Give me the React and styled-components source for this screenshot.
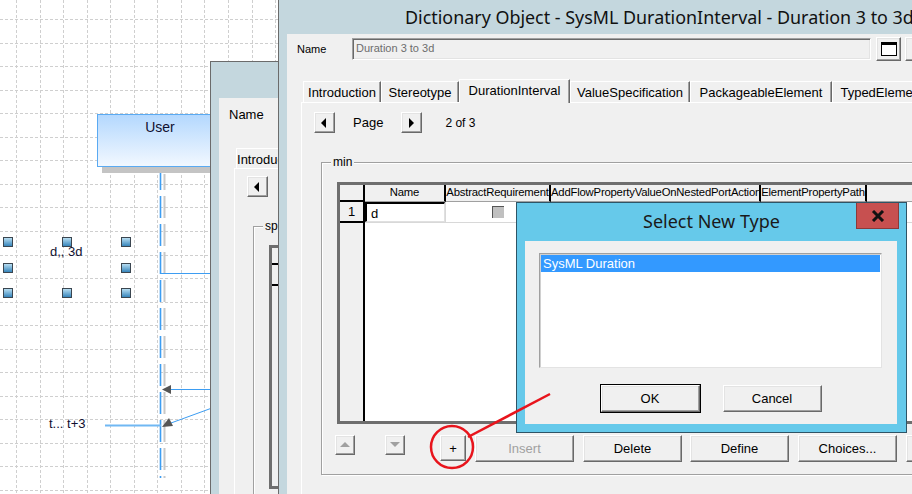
import React from 'react';
import styled, { createGlobalStyle } from 'styled-components';

const FRAME = '#c4d7de';
const EDGE = '#6b6b6b';
const FACE = '#f0f0f0';
const UI_FONT = '"Liberation Sans", Arial, sans-serif';
const TITLE_FONT = '"Noto Sans", "Open Sans", sans-serif';

const GlobalStyle = createGlobalStyle`
  html, body { margin: 0; padding: 0; }
  body { font-family: ${UI_FONT}; background: #fff; }
`;

const Screen = styled.div`
  position: relative;
  width: 912px;
  height: 494px;
  overflow: hidden;
  background: #fff;
`;

/* ---------- diagram canvas ---------- */

const Canvas = styled.div`
  position: absolute;
  inset: 0;
`;

const CanvasSvg = styled.svg`
  position: absolute;
  left: 0;
  top: 0;
`;

const UserBox = styled.div`
  position: absolute;
  left: 97px;
  top: 114px;
  width: 126px;
  height: 53px;
  box-sizing: border-box;
  border: 1px solid #5aaaf2;
  background: linear-gradient(#b4d8fe, #f2f8ff);
  box-shadow: 5px 6px 0 #c4c4c4;
  font: 14px ${UI_FONT};
  color: #101030;
  text-align: center;
  padding-top: 4px;
`;

const DiagramLabel = styled.div`
  position: absolute;
  left: ${p => p.$x}px;
  top: ${p => p.$y}px;
  font: 13px ${UI_FONT};
  color: #101030;
  white-space: nowrap;
`;

/* ---------- windows ---------- */

const Window = styled.div`
  position: absolute;
  left: ${p => p.$x}px;
  top: ${p => p.$y}px;
  width: ${p => p.$w}px;
  height: ${p => p.$h}px;
  box-sizing: border-box;
  background: ${p => p.$frame || FRAME};
  border: 1px solid ${p => p.$edge || EDGE};
  display: flex;
  flex-direction: column;
`;

const TitleBar = styled.div`
  height: ${p => p.$h}px;
  flex: none;
  display: flex;
  align-items: center;
  padding-left: ${p => p.$pad || 0}px;
  font: 17.9px ${TITLE_FONT};
  color: #111;
  white-space: nowrap;
  overflow: hidden;
`;

const Client = styled.div`
  flex: 1;
  margin-left: 8px;
  background: ${FACE};
  display: flex;
  flex-direction: column;
  padding: ${p => p.$pad};
  font: 12px ${UI_FONT};
  color: #000;
`;

const Label = styled.div`
  font-size: ${p => p.$size || 12}px;
  width: ${p => p.$w || 'auto'}px;
  flex: none;
  margin-left: ${p => p.$ml || 0}px;
  white-space: nowrap;
`;

const Row = styled.div`
  display: flex;
  align-items: ${p => p.$align || 'center'};
  margin-top: ${p => p.$mt || 0}px;
  margin-left: ${p => p.$ml || 0}px;
  height: ${p => p.$h}px;
  flex: none;
`;

const TextBox = styled.div`
  width: ${p => p.$w}px;
  height: 22px;
  box-sizing: border-box;
  border: 1px solid;
  border-color: #a0a0a0 #fff #fff #a0a0a0;
  box-shadow: inset 1px 1px 0 #696969, inset -1px -1px 0 #e3e3e3;
  padding: 3px 3px;
  font-size: 11px;
  color: #6d6d6d;
  flex: none;
`;

const Raised = styled.div`
  width: ${p => p.$w}px;
  height: ${p => p.$h}px;
  margin-left: ${p => p.$ml || 0}px;
  flex: none;
  box-sizing: border-box;
  background: ${FACE};
  border: 1px solid;
  border-color: #fff #696969 #696969 #fff;
  box-shadow: inset -1px -1px 0 #a0a0a0, inset 1px 1px 0 #e3e3e3;
  display: flex;
  align-items: center;
  justify-content: center;
  font-size: 13px;
  color: ${p => (p.$disabled ? '#a0a0a0' : '#000')};
  outline: ${p => (p.$default ? '1px solid #000' : 'none')};
`;

const TabStrip = styled.div`
  display: flex;
  align-items: flex-end;
  height: ${p => p.$h}px;
  margin-top: ${p => p.$mt}px;
  margin-left: ${p => p.$ml}px;
  padding-left: 2px;
  flex: none;
`;

const Tab = styled.div`
  width: ${p => p.$w}px;
  height: ${p => p.$h || (p.$active ? 24 : 21)}px;
  box-sizing: border-box;
  flex: none;
  border-top: 1px solid #fff;
  border-left: 1px solid #fff;
  border-right: 1px solid #696969;
  box-shadow: inset -1px 0 0 #a0a0a0;
  background: ${FACE};
  font-size: 13px;
  text-align: center;
  padding-top: 3px;
  margin-bottom: ${p => (p.$active ? -1 : 0)}px;
  position: relative;
  z-index: ${p => (p.$active ? 1 : 0)};
  white-space: nowrap;
  overflow: hidden;
`;

const TabPanel = styled.div`
  flex: 1;
  margin-left: ${p => p.$ml}px;
  border-top: 1px solid #fff;
  border-left: 1px solid #fff;
  display: flex;
  flex-direction: column;
  padding: ${p => p.$pad};
`;

const Group = styled.div`
  margin-top: ${p => p.$mt}px;
  margin-left: ${p => p.$ml}px;
  width: ${p => p.$w}px;
  height: ${p => p.$h}px;
  box-sizing: border-box;
  flex: none;
  border: 1px solid #a0a0a0;
  box-shadow: inset 1px 1px 0 #fff, 1px 1px 0 #fff;
  display: flex;
  flex-direction: column;
`;

const Legend = styled.div`
  align-self: flex-start;
  margin: -8px 0 0 9px;
  padding: 0 2px;
  height: 14px;
  line-height: 14px;
  background: ${FACE};
  font-size: 12px;
  white-space: nowrap;
`;

/* ---------- data grid ---------- */

const Grid = styled.div`
  margin-top: ${p => p.$mt}px;
  margin-left: ${p => p.$ml}px;
  height: ${p => p.$h}px;
  width: ${p => p.$w}px;
  box-sizing: border-box;
  flex: none;
  border: 3px solid #6e6e6e;
  border-right: none;
  background: #fff;
  display: flex;
  flex-direction: column;
`;

const GridRow = styled.div`
  display: flex;
  height: ${p => p.$h}px;
  flex: none;
`;

const HeadCell = styled.div`
  width: ${p => p.$w}px;
  flex: ${p => (p.$w ? 'none' : 1)};
  box-sizing: border-box;
  background: ${FACE};
  border-right: ${p => (p.$last ? 'none' : '2px solid #000')};
  border-bottom: ${p => (p.$corner ? '2px solid #000' : '1px solid #a0a0a0')};
  font-size: 11.3px;
  letter-spacing: -0.2px;
  text-align: center;
  line-height: 15px;
  white-space: nowrap;
  overflow: hidden;
`;

const RowHead = styled(HeadCell)`
  border-bottom: 2px solid #000;
  font-size: 13px;
  letter-spacing: 0;
  line-height: 19px;
`;

const Cell = styled.div`
  width: ${p => p.$w}px;
  flex: ${p => (p.$w ? 'none' : 1)};
  box-sizing: border-box;
  border-right: ${p => (p.$last ? 'none' : '1px solid #d8d8d8')};
  border-bottom: 1px solid #d8d8d8;
  display: flex;
  align-items: center;
  justify-content: center;
`;

const EditCell = styled.div`
  width: 100%;
  height: 100%;
  box-sizing: border-box;
  border-top: 2px solid #000;
  border-left: 2px solid #000;
  border-bottom: 1px solid #e0e0e0;
  border-right: 1px solid #e0e0e0;
  padding: 2px 4px;
  font-size: 13px;
`;

const Check = styled.div`
  width: 12px;
  height: 12px;
  box-sizing: border-box;
  background: #c0c0c0;
  border-top: 1px solid #555;
  border-left: 1px solid #555;
`;

const GridBody = styled.div`
  flex: 1;
  display: flex;
`;

const RowHeadFill = styled.div`
  width: 25px;
  flex: none;
  box-sizing: border-box;
  background: ${FACE};
  border-right: 2px solid #000;
`;

/* ---------- select dialog ---------- */

const DialogTitle = styled.div`
  height: 38px;
  flex: none;
  display: grid;
  grid-template-columns: 1fr auto 1fr;
  align-items: start;
`;

const DialogCaption = styled.div`
  grid-column: 2;
  font: 18px ${TITLE_FONT};
  color: #1a1a1a;
  padding-top: 6px;
`;

const CloseBtn = styled.div`
  grid-column: 3;
  justify-self: end;
  margin-right: 7px;
  width: 43px;
  height: 26px;
  box-sizing: border-box;
  background: #c75050;
  border: 1px solid #8a3a3a;
  border-top: none;
  display: flex;
  align-items: center;
  justify-content: center;
`;

const DialogBody = styled.div`
  flex: 1;
  margin: 0 9px 8px 8px;
  background: ${FACE};
  display: flex;
  flex-direction: column;
  padding: 12px 0 0 14px;
  font: 13px ${UI_FONT};
`;

const ListBox = styled.div`
  width: 343px;
  height: 115px;
  box-sizing: border-box;
  background: #fff;
  border: 1px solid;
  border-color: #a0a0a0 #e3e3e3 #e3e3e3 #a0a0a0;
  box-shadow: inset 1px 1px 0 #d0d0d0;
  padding: 1px;
`;

const ListItem = styled.div`
  height: 17px;
  background: ${p => (p.$selected ? '#3399ff' : 'transparent')};
  color: ${p => (p.$selected ? '#fff' : '#000')};
  padding-left: 2px;
  line-height: 17px;
  font-size: 13px;
`;

const DialogButtons = styled.div`
  display: flex;
  justify-content: center;
  gap: 23px;
  margin-top: 17px;
  padding-right: 14px;
`;

const Overlay = styled.svg`
  position: absolute;
  left: 0;
  top: 0;
  pointer-events: none;
`;

/* ---------- small drawings ---------- */

const Arrow = ({ dir, color = '#000' }) => {
  const pts = {
    left: '7,1 7,11 2,6',
    right: '3,1 3,11 8,6',
    up: '1,8 11,8 6,3',
    down: '1,3 11,3 6,8',
  }[dir];
  return (
    <svg width="12" height="12" viewBox="0 0 12 12">
      <polygon points={pts} fill={color} />
    </svg>
  );
};

const WindowIcon = () => (
  <svg width="16" height="14" viewBox="0 0 16 14">
    <rect x="0.5" y="0.5" width="15" height="13" fill="#fff" stroke="#000" />
    <rect x="0" y="0" width="16" height="3" fill="#000" />
  </svg>
);

const CloseX = () => (
  <svg width="14" height="12" viewBox="0 0 14 12">
    <path d="M2 1 L12 11 M12 1 L2 11" stroke="#111" strokeWidth="3" />
  </svg>
);

const gridX = Array.from({ length: 12 }, (_, i) => Math.round(16 + i * 23.55) + 0.5);
const gridY = Array.from({ length: 21 }, (_, i) => Math.round(19 + i * 23.55) + 0.5);
const handles = [
  [8, 242], [67, 242], [126, 242],
  [8, 268], [126, 268],
  [8, 293], [67, 293], [126, 293],
];

const Diagram = () => (
  <Canvas>
    <CanvasSvg width="290" height="494">
      <defs>
        <linearGradient id="hnd" x1="0" y1="0" x2="0" y2="1">
          <stop offset="0" stopColor="#bfe3f5" />
          <stop offset="1" stopColor="#2f80b8" />
        </linearGradient>
      </defs>
      {gridX.map(x => (
        <line key={'v' + x} x1={x} y1="0" x2={x} y2="494" stroke="#cfcfcf" strokeDasharray="3 2" />
      ))}
      {gridY.map(y => (
        <line key={'h' + y} x1="0" y1={y} x2="290" y2={y} stroke="#cfcfcf" strokeDasharray="3 2" />
      ))}
      <line x1="164.5" y1="174" x2="164.5" y2="478" stroke="#c8c8c8" strokeWidth="2" strokeDasharray="22 6" strokeDashoffset="6" />
      <line x1="160.5" y1="168" x2="160.5" y2="478" stroke="#3d9df2" strokeWidth="1.6" strokeDasharray="22 6" />
      <line x1="161" y1="273.5" x2="212" y2="273.5" stroke="#3d9df2" />
      <line x1="170" y1="389.5" x2="212" y2="389.5" stroke="#3d9df2" />
      <polygon points="162,389.5 171,385 171,394" fill="#555" />
      <line x1="171" y1="423" x2="212" y2="408" stroke="#3d9df2" />
      <polygon points="162,427 169,418 173,426" fill="#555" />
      <line x1="105" y1="425.5" x2="161" y2="425.5" stroke="#70b8f3" strokeWidth="2" />
      {handles.map(([cx, cy]) => (
        <rect key={cx + '-' + cy} x={cx - 4.5} y={cy - 4.5} width="9" height="9" fill="url(#hnd)" stroke="#3b4650" />
      ))}
    </CanvasSvg>
    <UserBox>User</UserBox>
    <DiagramLabel $x={50} $y={244}>d,, 3d</DiagramLabel>
    <DiagramLabel $x={49} $y={416}>t... t+3</DiagramLabel>
  </Canvas>
);

const BackWindow = () => (
  <Window $x={210} $y={61} $w={120} $h={460}>
    <TitleBar $h={36} />
    <Client $pad="9px 0 0 0">
      <Label $size={13} $ml={10}>Name</Label>
      <TabStrip $h={20} $mt={26} $ml={15}>
        <Tab $w={70} $h={20}>Introduction</Tab>
      </TabStrip>
      <TabPanel $pad="7px 0 0 12px" $ml={15}>
        <Raised $w={21} $h={21}><Arrow dir="left" /></Raised>
        <Group $mt={29} $ml={6} $w={120} $h={300}>
          <Legend>specification</Legend>
          <Grid $mt={12} $ml={15} $h={244} $w={60}>
            <GridRow $h={17}>
              <HeadCell $w={25} $corner />
            </GridRow>
            <GridRow $h={21}>
              <RowHead $w={25} />
            </GridRow>
            <GridBody>
              <RowHeadFill />
            </GridBody>
          </Grid>
        </Group>
      </TabPanel>
    </Client>
  </Window>
);

const tabs = [
  { t: 'Introduction', w: 78 },
  { t: 'Stereotype', w: 78 },
  { t: 'DurationInterval', w: 111, active: true },
  { t: 'ValueSpecification', w: 120 },
  { t: 'PackageableElement', w: 142 },
  { t: 'TypedElement', w: 100 },
];

const columns = [
  { t: 'Name', w: 81 },
  { t: 'AbstractRequirement', w: 105 },
  { t: 'AddFlowPropertyValueOnNestedPortAction', w: 210 },
  { t: 'ElementPropertyPath', w: 106 },
];

const DictionaryWindow = () => (
  <Window $x={278} $y={-1} $w={700} $h={520}>
    <TitleBar $h={34} $pad={126}>
      Dictionary Object - SysML DurationInterval - Duration 3 to 3d
    </TitleBar>
    <Client $pad="4px 0 0 10px">
      <Row $h={22}>
        <Label $size={11} $w={55}>Name</Label>
        <TextBox $w={519}>Duration 3 to 3d</TextBox>
        <Raised $w={25} $h={24} $ml={5}><WindowIcon /></Raised>
        <Raised $w={25} $h={24} $ml={4} />
      </Row>
      <TabStrip $h={24} $mt={18} $ml={4}>
        {tabs.map(tab => (
          <Tab key={tab.t} $w={tab.w} $active={tab.active}>{tab.t}</Tab>
        ))}
      </TabStrip>
      <TabPanel $pad="9px 0 0 12px" $ml={4}>
        <Row $h={21}>
          <Raised $w={21} $h={21}><Arrow dir="left" /></Raised>
          <Label $size={13} $ml={18}>Page</Label>
          <Raised $w={21} $h={21} $ml={18}><Arrow dir="right" /></Raised>
          <Label $size={12} $ml={23}>2 of 3</Label>
        </Row>
        <Group $mt={29} $ml={7} $w={620} $h={313}>
          <Legend>min</Legend>
          <Grid $mt={13} $ml={15} $h={242} $w={600}>
            <GridRow $h={17}>
              <HeadCell $w={25} $corner />
              {columns.map(c => (
                <HeadCell key={c.t} $w={c.w}>{c.t}</HeadCell>
              ))}
              <HeadCell $last />
            </GridRow>
            <GridRow $h={21}>
              <RowHead $w={25}>1</RowHead>
              <Cell $w={81}><EditCell>d</EditCell></Cell>
              <Cell $w={105}><Check /></Cell>
              <Cell $w={210} />
              <Cell $w={106} />
              <Cell $last />
            </GridRow>
            <GridBody>
              <RowHeadFill />
            </GridBody>
          </Grid>
          <Row $h={27} $mt={11} $ml={13} $align="flex-start">
            <Raised $w={20} $h={20}><Arrow dir="up" color="#a0a0a0" /></Raised>
            <Raised $w={20} $h={20} $ml={30}><Arrow dir="down" color="#a0a0a0" /></Raised>
            <Raised $w={26} $h={26} $ml={35}>+</Raised>
            <Raised $w={99} $h={27} $ml={9} $disabled>Insert</Raised>
            <Raised $w={99} $h={27} $ml={9}>Delete</Raised>
            <Raised $w={99} $h={27} $ml={8}>Define</Raised>
            <Raised $w={99} $h={27} $ml={9}>Choices...</Raised>
            <Raised $w={99} $h={27} $ml={9} />
          </Row>
        </Group>
      </TabPanel>
    </Client>
  </Window>
);

const SelectTypeDialog = () => (
  <Window $x={516} $y={202} $w={391} $h={231} $frame="#66c9ea" $edge="#2e5466">
    <DialogTitle>
      <DialogCaption>Select New Type</DialogCaption>
      <CloseBtn><CloseX /></CloseBtn>
    </DialogTitle>
    <DialogBody>
      <ListBox>
        <ListItem $selected>SysML Duration</ListItem>
      </ListBox>
      <DialogButtons>
        <Raised $w={99} $h={27} $default>OK</Raised>
        <Raised $w={99} $h={27}>Cancel</Raised>
      </DialogButtons>
    </DialogBody>
  </Window>
);

const App = () => (
  <Screen>
    <GlobalStyle />
    <Diagram />
    <BackWindow />
    <DictionaryWindow />
    <SelectTypeDialog />
    <Overlay width="912" height="494">
      <circle cx="452" cy="447" r="21" fill="none" stroke="#e8141c" strokeWidth="2.5" />
      <line x1="468" y1="437" x2="550" y2="394" stroke="#e8141c" strokeWidth="2.5" />
    </Overlay>
  </Screen>
);

export default App;
